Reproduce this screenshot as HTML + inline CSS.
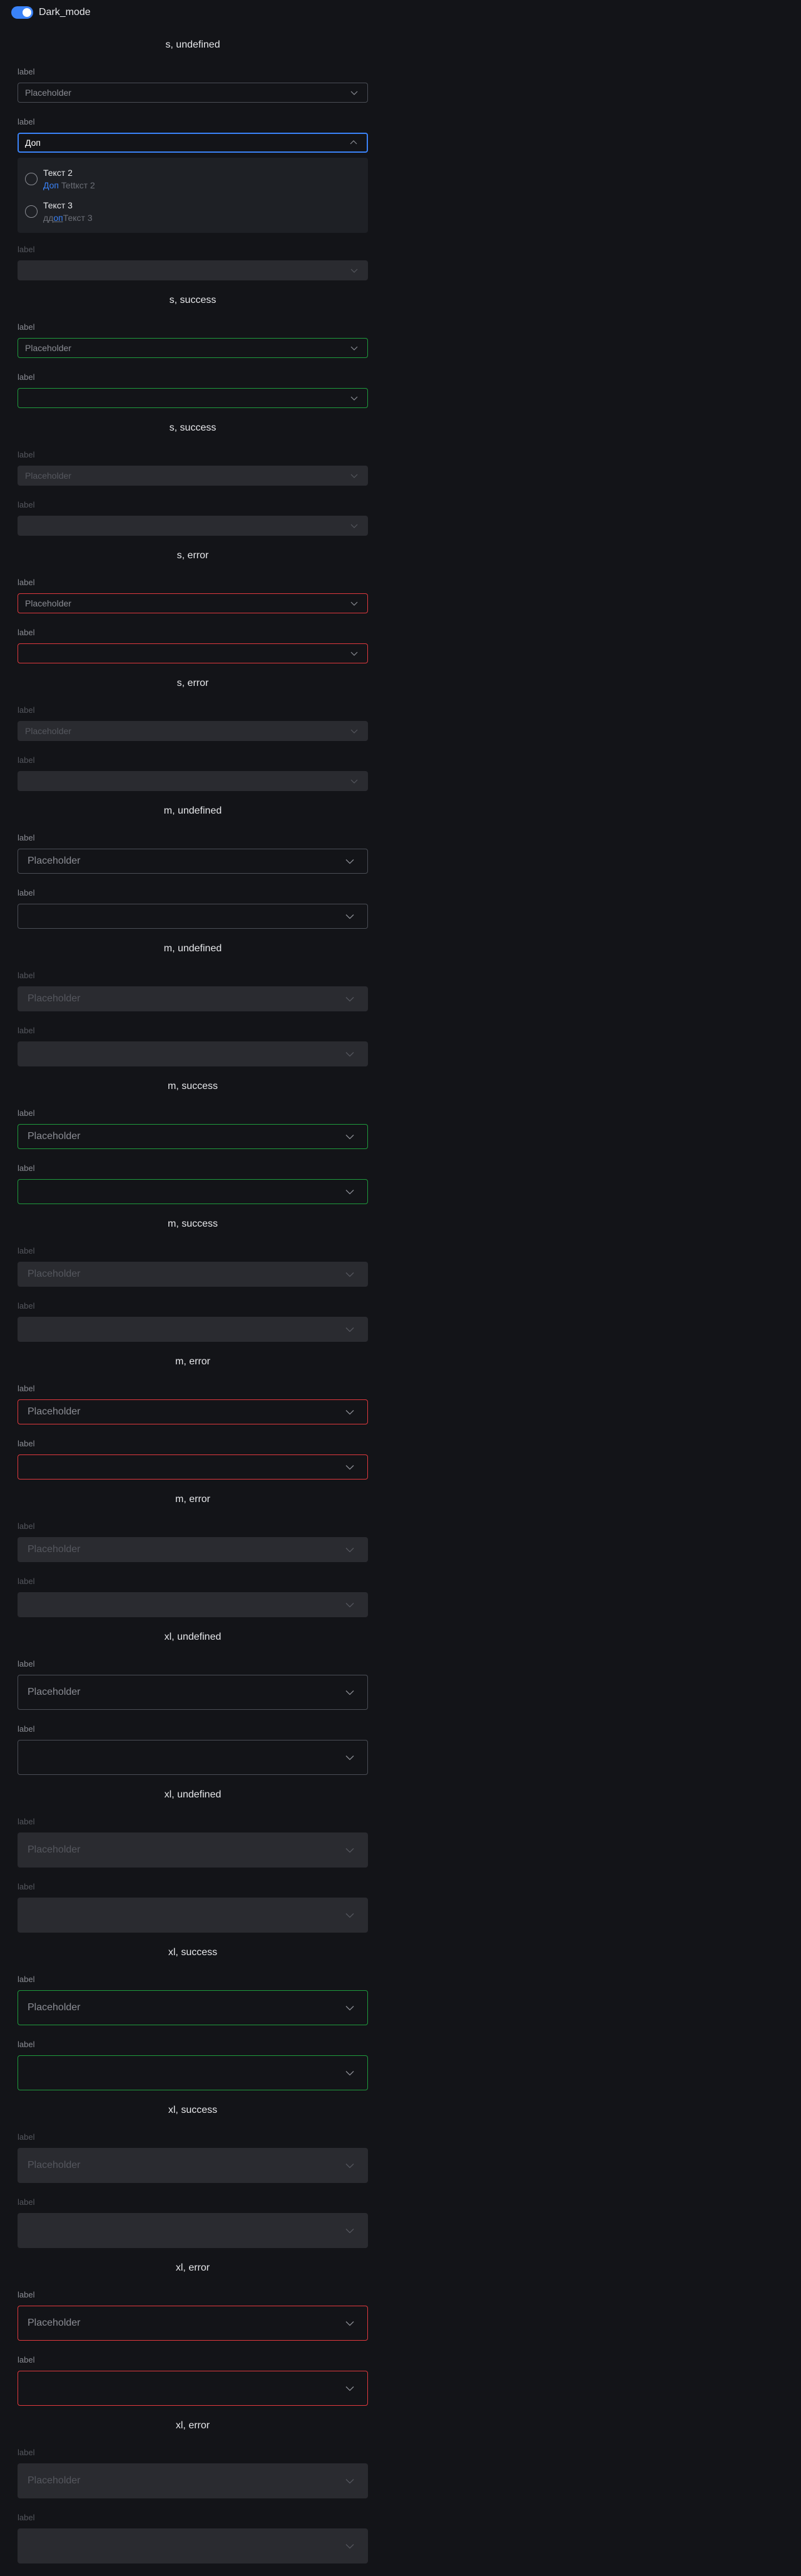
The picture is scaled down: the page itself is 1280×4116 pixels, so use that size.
<!DOCTYPE html>
<html><head><meta charset="utf-8">
<style>
*{box-sizing:border-box;margin:0;padding:0}
html,body{width:1280px;height:4116px;background:#131418;overflow:hidden}
body{position:relative;font-family:"Liberation Sans","Noto Sans CJK SC",sans-serif;color:#e6e7ea}
.tg{position:absolute;left:18px;top:10px;width:35px;height:20px;border-radius:10px;background:#3a82f7}
.tg:after{content:"";position:absolute;right:3px;top:3px;width:14px;height:14px;border-radius:50%;background:#fff}
.tgl{position:absolute;left:62px;top:10px;font-size:16px;line-height:20px;color:#e6e7ea}
.wrap{position:absolute;left:28px;top:60px;width:560px}
.sec{padding-bottom:20px}
.t{height:24px;line-height:24px;text-align:center;font-size:16px;color:#e6e7ea}
.l{margin-top:22px;height:18px;line-height:18px;font-size:13px;color:#8b8d94}
.in{margin-top:8px;position:relative;border:1px solid #4b4e56;border-radius:4px;color:#8b8d94;background:#131418}
.s .in{height:32px;line-height:30px;padding-left:11px;font-size:14px}
.m .in{height:40px;line-height:38px;padding-left:15px;font-size:16px}
.x .in{height:56px;line-height:54px;padding-left:15px;font-size:16px}
.in svg{position:absolute;top:50%;transform:translateY(-50%)}
.s .in svg{right:15px;width:12px;height:12px}
.m .in svg,.x .in svg{right:21px;width:14px;height:14px}
.ok .in{border-color:#1f9b3d}
.er .in{border-color:#e0393e}
.d .l{color:#55575e}
.d .in{border-color:#2a2b30;background:#2a2b30;color:#55575e}
.d .in svg path{stroke:#55575e}
.dd{position:absolute;left:28px;top:252px;width:560px;height:120px;background:#1e2025;border-radius:4px}
.it{position:absolute;left:0;width:100%}
.rd{position:absolute;left:12px;width:20px;height:20px;border:1.5px solid #8b8d94;border-radius:50%}
.it .a{position:absolute;left:41px;font-size:14px;line-height:18px;color:#e6e7ea;white-space:nowrap}
.it .b{position:absolute;left:41px;font-size:14px;line-height:18px;color:#6b6e76;white-space:nowrap}
.bl{color:#3a82f7}
</style></head><body>
<div class="tg"></div><div class="tgl">Dark_mode</div>
<div class="wrap">
<!-- S -->
<div class="sec s"><div class="t">s, undefined</div>
<div class="l">label</div><div class="in">Placeholder<svg viewBox="0 0 12 12"><path d="M1 4L6 9L11 4" fill="none" stroke="#8b8d94" stroke-width="1.2"/></svg></div>
<div class="l">label</div><div class="in" style="border:2px solid #3a82f7;line-height:28px;padding-left:10px;color:#fff">Доп<svg viewBox="0 0 12 12"><path d="M1 8L6 3L11 8" fill="none" stroke="#8b8d94" stroke-width="1.2"/></svg></div></div>
<div class="sec s d"><div class="t">s, undefined</div>
<div class="l">label</div><div class="in">Placeholder<svg viewBox="0 0 12 12"><path d="M1 4L6 9L11 4" fill="none" stroke="#8b8d94" stroke-width="1.2"/></svg></div>
<div class="l">label</div><div class="in"><svg viewBox="0 0 12 12"><path d="M1 4L6 9L11 4" fill="none" stroke="#8b8d94" stroke-width="1.2"/></svg></div></div>
<div class="sec s ok"><div class="t">s, success</div>
<div class="l">label</div><div class="in">Placeholder<svg viewBox="0 0 12 12"><path d="M1 4L6 9L11 4" fill="none" stroke="#8b8d94" stroke-width="1.2"/></svg></div>
<div class="l">label</div><div class="in"><svg viewBox="0 0 12 12"><path d="M1 4L6 9L11 4" fill="none" stroke="#8b8d94" stroke-width="1.2"/></svg></div></div>
<div class="sec s d"><div class="t">s, success</div>
<div class="l">label</div><div class="in">Placeholder<svg viewBox="0 0 12 12"><path d="M1 4L6 9L11 4" fill="none" stroke="#8b8d94" stroke-width="1.2"/></svg></div>
<div class="l">label</div><div class="in"><svg viewBox="0 0 12 12"><path d="M1 4L6 9L11 4" fill="none" stroke="#8b8d94" stroke-width="1.2"/></svg></div></div>
<div class="sec s er"><div class="t">s, error</div>
<div class="l">label</div><div class="in">Placeholder<svg viewBox="0 0 12 12"><path d="M1 4L6 9L11 4" fill="none" stroke="#8b8d94" stroke-width="1.2"/></svg></div>
<div class="l">label</div><div class="in"><svg viewBox="0 0 12 12"><path d="M1 4L6 9L11 4" fill="none" stroke="#8b8d94" stroke-width="1.2"/></svg></div></div>
<div class="sec s d"><div class="t">s, error</div>
<div class="l">label</div><div class="in">Placeholder<svg viewBox="0 0 12 12"><path d="M1 4L6 9L11 4" fill="none" stroke="#8b8d94" stroke-width="1.2"/></svg></div>
<div class="l">label</div><div class="in"><svg viewBox="0 0 12 12"><path d="M1 4L6 9L11 4" fill="none" stroke="#8b8d94" stroke-width="1.2"/></svg></div></div>
<!-- M -->
<div class="sec m"><div class="t">m, undefined</div>
<div class="l">label</div><div class="in">Placeholder<svg viewBox="0 0 14 14"><path d="M1 4.5L7 10.5L13 4.5" fill="none" stroke="#8b8d94" stroke-width="1.3"/></svg></div>
<div class="l">label</div><div class="in"><svg viewBox="0 0 14 14"><path d="M1 4.5L7 10.5L13 4.5" fill="none" stroke="#8b8d94" stroke-width="1.3"/></svg></div></div>
<div class="sec m d"><div class="t">m, undefined</div>
<div class="l">label</div><div class="in">Placeholder<svg viewBox="0 0 14 14"><path d="M1 4.5L7 10.5L13 4.5" fill="none" stroke="#8b8d94" stroke-width="1.3"/></svg></div>
<div class="l">label</div><div class="in"><svg viewBox="0 0 14 14"><path d="M1 4.5L7 10.5L13 4.5" fill="none" stroke="#8b8d94" stroke-width="1.3"/></svg></div></div>
<div class="sec m ok"><div class="t">m, success</div>
<div class="l">label</div><div class="in">Placeholder<svg viewBox="0 0 14 14"><path d="M1 4.5L7 10.5L13 4.5" fill="none" stroke="#8b8d94" stroke-width="1.3"/></svg></div>
<div class="l">label</div><div class="in"><svg viewBox="0 0 14 14"><path d="M1 4.5L7 10.5L13 4.5" fill="none" stroke="#8b8d94" stroke-width="1.3"/></svg></div></div>
<div class="sec m d"><div class="t">m, success</div>
<div class="l">label</div><div class="in">Placeholder<svg viewBox="0 0 14 14"><path d="M1 4.5L7 10.5L13 4.5" fill="none" stroke="#8b8d94" stroke-width="1.3"/></svg></div>
<div class="l">label</div><div class="in"><svg viewBox="0 0 14 14"><path d="M1 4.5L7 10.5L13 4.5" fill="none" stroke="#8b8d94" stroke-width="1.3"/></svg></div></div>
<div class="sec m er"><div class="t">m, error</div>
<div class="l">label</div><div class="in">Placeholder<svg viewBox="0 0 14 14"><path d="M1 4.5L7 10.5L13 4.5" fill="none" stroke="#8b8d94" stroke-width="1.3"/></svg></div>
<div class="l">label</div><div class="in"><svg viewBox="0 0 14 14"><path d="M1 4.5L7 10.5L13 4.5" fill="none" stroke="#8b8d94" stroke-width="1.3"/></svg></div></div>
<div class="sec m d"><div class="t">m, error</div>
<div class="l">label</div><div class="in">Placeholder<svg viewBox="0 0 14 14"><path d="M1 4.5L7 10.5L13 4.5" fill="none" stroke="#8b8d94" stroke-width="1.3"/></svg></div>
<div class="l">label</div><div class="in"><svg viewBox="0 0 14 14"><path d="M1 4.5L7 10.5L13 4.5" fill="none" stroke="#8b8d94" stroke-width="1.3"/></svg></div></div>
<!-- XL -->
<div class="sec x"><div class="t">xl, undefined</div>
<div class="l">label</div><div class="in">Placeholder<svg viewBox="0 0 14 14"><path d="M1 4.5L7 10.5L13 4.5" fill="none" stroke="#8b8d94" stroke-width="1.3"/></svg></div>
<div class="l">label</div><div class="in"><svg viewBox="0 0 14 14"><path d="M1 4.5L7 10.5L13 4.5" fill="none" stroke="#8b8d94" stroke-width="1.3"/></svg></div></div>
<div class="sec x d"><div class="t">xl, undefined</div>
<div class="l">label</div><div class="in">Placeholder<svg viewBox="0 0 14 14"><path d="M1 4.5L7 10.5L13 4.5" fill="none" stroke="#8b8d94" stroke-width="1.3"/></svg></div>
<div class="l">label</div><div class="in"><svg viewBox="0 0 14 14"><path d="M1 4.5L7 10.5L13 4.5" fill="none" stroke="#8b8d94" stroke-width="1.3"/></svg></div></div>
<div class="sec x ok"><div class="t">xl, success</div>
<div class="l">label</div><div class="in">Placeholder<svg viewBox="0 0 14 14"><path d="M1 4.5L7 10.5L13 4.5" fill="none" stroke="#8b8d94" stroke-width="1.3"/></svg></div>
<div class="l">label</div><div class="in"><svg viewBox="0 0 14 14"><path d="M1 4.5L7 10.5L13 4.5" fill="none" stroke="#8b8d94" stroke-width="1.3"/></svg></div></div>
<div class="sec x d"><div class="t">xl, success</div>
<div class="l">label</div><div class="in">Placeholder<svg viewBox="0 0 14 14"><path d="M1 4.5L7 10.5L13 4.5" fill="none" stroke="#8b8d94" stroke-width="1.3"/></svg></div>
<div class="l">label</div><div class="in"><svg viewBox="0 0 14 14"><path d="M1 4.5L7 10.5L13 4.5" fill="none" stroke="#8b8d94" stroke-width="1.3"/></svg></div></div>
<div class="sec x er"><div class="t">xl, error</div>
<div class="l">label</div><div class="in">Placeholder<svg viewBox="0 0 14 14"><path d="M1 4.5L7 10.5L13 4.5" fill="none" stroke="#8b8d94" stroke-width="1.3"/></svg></div>
<div class="l">label</div><div class="in"><svg viewBox="0 0 14 14"><path d="M1 4.5L7 10.5L13 4.5" fill="none" stroke="#8b8d94" stroke-width="1.3"/></svg></div></div>
<div class="sec x d"><div class="t">xl, error</div>
<div class="l">label</div><div class="in">Placeholder<svg viewBox="0 0 14 14"><path d="M1 4.5L7 10.5L13 4.5" fill="none" stroke="#8b8d94" stroke-width="1.3"/></svg></div>
<div class="l">label</div><div class="in"><svg viewBox="0 0 14 14"><path d="M1 4.5L7 10.5L13 4.5" fill="none" stroke="#8b8d94" stroke-width="1.3"/></svg></div></div>
</div>
<div class="dd">
<div class="it" style="top:14px"><div class="rd" style="top:10px"></div><div class="a" style="top:1px">Текст 2</div><div class="b" style="top:21px"><span class="bl">Доп</span> Tettкст 2</div></div>
<div class="it" style="top:66px"><div class="rd" style="top:10px"></div><div class="a" style="top:1px">Текст 3</div><div class="b" style="top:21px"><span style="text-decoration:underline"><span style="color:#6b6e76">дд</span><span class="bl">оп</span></span>Текст 3</div></div>
</div>
</body></html>
